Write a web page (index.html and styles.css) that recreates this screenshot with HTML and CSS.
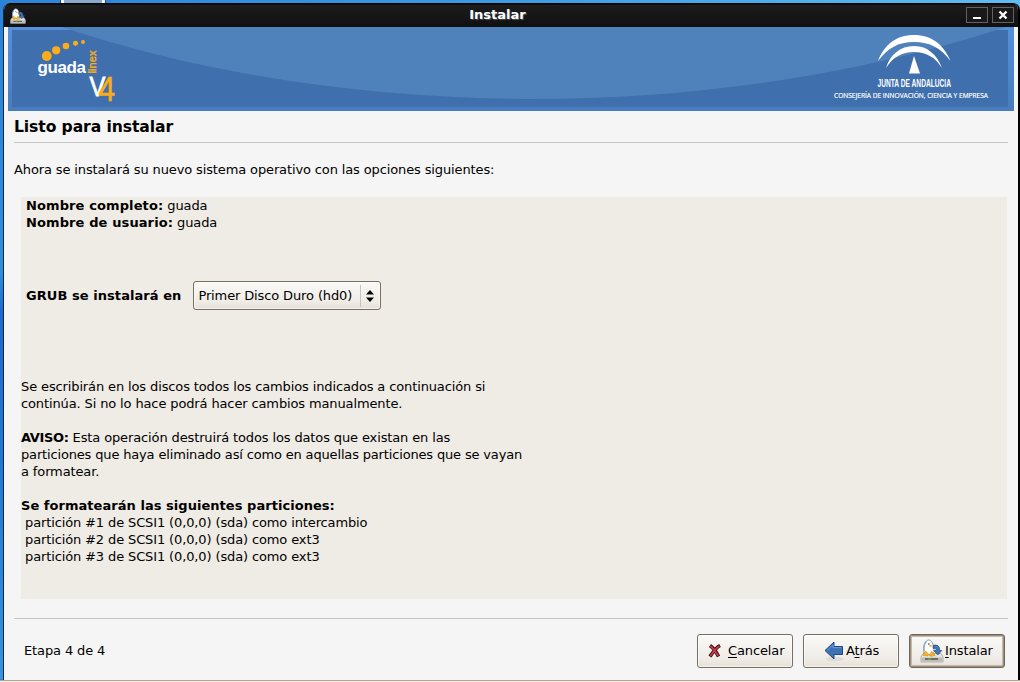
FILE: index.html
```html
<!DOCTYPE html>
<html lang="es">
<head>
<meta charset="utf-8">
<title>Instalar</title>
<link rel="stylesheet" href="styles.css">
</head>
<body>
<svg width="0" height="0" class="defs" aria-hidden="true">
  <symbol id="installer" viewBox="0 0 24 24">
    <path d="M3 14.500h18l2 3.500v5H1v-5z" fill="#e4e4e1" stroke="#b1b0ac"/>
    <path d="M1.500 18.500h21V22.500h-21z" fill="#bdbcb8"/>
    <path d="M5 20h13" stroke="#444" stroke-width="1.300"/>
    <path d="M8 20h3" stroke="#69b51e" stroke-width="1.500"/>
    <path d="M4 14C3 8 5 1.500 8.500 1c3.500-.2 5 5 5.500 8 .5 4 0 6-4.500 6.500-3 .2-5-.2-5.500-1.500z" fill="#fff" stroke="#7696c0" stroke-width=".9"/>
    <path d="M6.200 2.500C4 5 3.500 9 4 12" fill="none" stroke="#88a9d2" stroke-width="1.500"/>
    <path d="M9.500 5.500l3 1.500-3 1z" fill="#efa51b"/>
    <circle cx="8.800" cy="5" r=".7" fill="#222"/>
    <path d="M13 6.500c4.500-1.500 7 1 6.500 5h2.300l-4 4.500-4-4.500h2.500c0-2-1-2.500-3.300-2z" fill="#3f78b4" stroke="#204a78" stroke-width=".7"/>
    <path d="M3.500 15l2-3 3.500 3.500-1.500 1.500-4-.5zM9.500 16.500l2-4 2.200 1.500 1.300 2.500-4 .8z" fill="#f6b51c" stroke="#c77e0c" stroke-width=".5"/>
  </symbol>
</svg>
<div class="desktop">
  <div class="behind"></div>
  <div class="window">
    <header class="titlebar">
      <svg class="app-icon" width="16" height="16"><use href="#installer"/></svg>
      <span class="title">Instalar</span>
      <span class="controls">
        <svg width="22" height="16"><rect x=".5" y=".5" width="21" height="15" fill="#191919" stroke="#626262"/><path d="M7 10h8v2H7z" fill="#fff"/></svg>
        <svg width="22" height="16"><rect x=".5" y=".5" width="21" height="15" fill="#191919" stroke="#626262"/><path d="M7.500 4.500l7 7M14.500 4.500l-7 7" stroke="#fff" stroke-width="2.400"/></svg>
      </span>
    </header>
    <svg class="banner" width="1006" height="84" viewBox="8 27 1006 84">
      <defs>
        <linearGradient id="frame" x1="0" y1="0" x2="0" y2="1"><stop offset="0" stop-color="#5590dc"/><stop offset="1" stop-color="#477cbd"/></linearGradient>
      </defs>
      <path d="M8 27h1006v84H8z" fill="url(#frame)"/>
      <path d="M12 30h996v77H12z" fill="#3f6fad"/>
      <path d="M62 27C205 75 370 99 533 99S860 75 1006 27z" fill="#4f81bb"/>
      <g fill="#fbac18">
        <circle cx="46.800" cy="56" r="4.900"/><circle cx="56.200" cy="50.300" r="4.100"/><circle cx="66" cy="46" r="3.300"/><circle cx="75.500" cy="43.300" r="2.500"/><circle cx="83" cy="42" r="1.900"/>
      </g>
      <text class="logo-guada" x="37.500" y="73" textLength="48.500">guada</text>
      <text class="logo-linex" transform="translate(96 73.500) rotate(-90)" textLength="23">linex</text>
      <text class="logo-version" transform="translate(89.500 95.500) scale(.85 1)"><tspan class="logo-v">V</tspan><tspan class="logo-four" dx="-8" dy="5.500">4</tspan></text>
      <g fill="#fff">
        <path d="M878 61C884 45 896 35 914 35S944 45 950.500 61C941 48 930 42 914 42S888 48 878 61z"/>
        <path d="M886 68C890 55 900 46 914 46S937 55 942 68C935 57 926 52 914 52S893 57 886 68z"/>
        <path d="M914 56l6 17.500h-11z"/>
      </g>
      <text class="junta" x="877.500" y="86.500" textLength="73.500" lengthAdjust="spacingAndGlyphs">JUNTA DE ANDALUCIA</text>
      <text class="consejeria" x="834" y="98" textLength="154" lengthAdjust="spacingAndGlyphs">CONSEJERÍA DE INNOVACIÓN, CIENCIA Y EMPRESA</text>
    </svg>
    <main class="content">
      <h1>Listo para instalar</h1>
      <p class="intro">Ahora se instalará su nuevo sistema operativo con las opciones siguientes:</p>
      <section class="summary">
        <div class="user"><b>Nombre completo:</b> guada<br><b>Nombre de usuario:</b> guada</div>
        <div class="grub">
          <b>GRUB se instalará en</b>
          <div class="select"><span>Primer Disco Duro (hd0)</span><svg width="20" height="22"><path d="M.5 0v22" stroke="#c9c4bb"/><path d="M6 9.500l4-4.500 4 4.500zM6 12.500h8L10 17z" fill="#000"/></svg></div>
        </div>
        <div class="details">
          <p>Se escribirán en los discos todos los cambios indicados a continuación si<br>continúa. Si no lo hace podrá hacer cambios manualmente.</p>
          <p><b class="warn">AVISO:</b> Esta operación destruirá todos los datos que existan en las<br><span class="tight">particiones que haya eliminado así como en aquellas particiones que se vayan</span><br>a formatear.</p>
          <p><b>Se formatearán las siguientes particiones:</b><br><span class="part">partición #1 de SCSI1 (0,0,0) (sda) como intercambio</span><br><span class="part">partición #2 de SCSI1 (0,0,0) (sda) como ext3</span><br><span class="part">partición #3 de SCSI1 (0,0,0) (sda) como ext3</span></p>
        </div>
      </section>
      <footer>
        <span class="step">Etapa 4 de 4</span>
        <div class="button cancel"><svg width="14" height="16"><path d="M2 2.500c3 2 6 6 8.500 11M12 2.500C8 4.500 5 9 2 13.500" fill="none" stroke="#2a0a0c" stroke-width="3.600"/><path d="M2.200 2.800c3 2 5.500 6 8 10.200M11.500 3C8 5 5 9 2.500 13" fill="none" stroke="#c2394a" stroke-width="2"/></svg><span><u>C</u>ancelar</span></div>
        <div class="button back"><svg width="20" height="22"><ellipse cx="11" cy="19" rx="9" ry="2" fill="#dedad4"/><path d="M1 10.500L10 2v4.500h8.500v8H10V19z" fill="#3d72b7" stroke="#20467f"/><path d="M3 10.500l6-5.600v2.700h8.500" fill="none" stroke="#6e9bd2"/></svg><span>A<u>t</u>rás</span></div>
        <div class="button install"><svg width="24" height="24"><use href="#installer"/></svg><span><u>I</u>nstalar</span></div>
      </footer>
    </main>
  </div>
  <div class="panel"></div>
</div>
</body>
</html>
```
FILE: styles.css
```css
* { box-sizing: border-box; }
body { margin: 0; font: 13px/17px "DejaVu Sans", sans-serif; color: #000; letter-spacing: -.125px; }
h1, p { margin: 0; }
b { letter-spacing: .04px; }
svg { display: block; flex: none; letter-spacing: 0; }
.defs { position: absolute; }
.desktop { position: relative; width: 1020px; height: 682px; overflow: hidden; display: flex; flex-direction: column; padding-left: 3px; background: linear-gradient(90deg, #2b85dc, #3b98e2 45%, #5fbdf2); }
.desktop::before { content: ""; position: absolute; left: 0; top: 0; width: 3px; height: 679px; background: linear-gradient(#2a83da, #2f8de0 40%, #1c6bd0 46%, #2379d6 70%, #3793e3); }
.behind { position: absolute; left: 61px; top: 0; width: 44px; height: 3px; background: #89a9cf; border: solid #f3f6fa; border-width: 0 3px; outline: 1px solid #304764; }
.window { position: relative; margin-top: 3px; width: 1017px; height: 677px; background: #f5f5f5; border-left: 1px solid #18283c; border-right: 2px solid #000; border-radius: 7px 7px 0 0; overflow: hidden; }
.titlebar { height: 24px; margin: 0 -2px 0 -1px; padding: 0 6px 0 7px; display: grid; grid-template-columns: 48px 1fr 48px; align-items: center; background: linear-gradient(#000 1px, #1c1c1c 2px, #101010); color: #fff; }
.title { text-align: center; font-weight: bold; text-shadow: 1px 1px 1px #555; padding: 0 29px 2px 0; letter-spacing: 0; }
.controls { display: flex; gap: 4px; }
.app-icon { margin-top: 1px; }
.banner { margin-left: 4px; }
.logo-guada { font: bold 17px "Liberation Sans", sans-serif; fill: #fff; }
.logo-linex { font: 11px "Liberation Sans", sans-serif; fill: #fbac18; stroke: #fbac18; stroke-width: .4px; }
.logo-v { font: 28px "Liberation Sans", sans-serif; fill: #fff; stroke: #fff; stroke-width: .8px; }
.logo-four { font: 35px "Liberation Sans", sans-serif; fill: #fbac18; stroke: #fbac18; stroke-width: .6px; }
.junta { font: bold 10.500px "Liberation Sans", sans-serif; fill: #fff; }
.consejeria { font: 7.500px "Open Sans", sans-serif; fill: #fff; stroke: #fff; stroke-width: .2px; }
.content { padding: 0 10px; }
h1 { font-size: 15.600px; line-height: 18px; padding: 7px 0 6px; height: 32px; border-bottom: 1px solid #c4c4c4; letter-spacing: -.09px; }
.intro { padding-top: 18px; height: 54px; }
.summary { margin: 0 1px 0 7px; height: 402px; background: #efebe5; display: flex; flex-direction: column; }
.user { padding-left: 5px; height: 84px; }
.user b { letter-spacing: .11px; }
.grub { display: flex; align-items: center; padding-left: 5px; gap: 12px; height: 29px; }
.grub b { letter-spacing: .06px; }
.select { display: flex; align-items: center; justify-content: space-between; width: 188px; height: 29px; padding-left: 4px; border: 1px solid #776f62; border-radius: 3px; background: linear-gradient(#faf9f7, #f0ede8 70%, #e5e0d8); box-shadow: inset 0 0 0 1px #ffffff90; }
.details { margin-top: 68px; display: flex; flex-direction: column; gap: 17px; }
.warn { letter-spacing: -.35px; }
.tight { letter-spacing: -.16px; }
.part { margin-left: 4px; }
footer { margin-top: 19px; border-top: 1px solid #c4c4c4; height: 60px; padding: 15px 3px 0 10px; display: flex; gap: 10px; }
.step { margin-right: auto; padding-top: 8px; }
.button { width: 96px; height: 34px; display: flex; align-items: center; border: 1px solid #776f62; border-radius: 3px; background: linear-gradient(#faf9f7, #f0ede8 70%, #e6e1d9); box-shadow: inset 0 0 0 1px #ffffff90; }
.button span { padding-bottom: 2px; }
.cancel { padding-left: 10px; gap: 6px; }
.back { padding-left: 20px; gap: 2px; }
.install { padding-left: 10px; gap: 1px; border-color: #6e665a; box-shadow: inset -1px -1px #9b9082, inset 0 0 0 1px #9b9082, inset 0 0 0 2px #c9b9ad; }
u { text-underline-offset: 2px; text-decoration-thickness: 1px; }
.panel { margin-left: -3px; height: 2px; border-top: 1px solid #b5a493; background: #f0e9e1; position: relative; }
```
